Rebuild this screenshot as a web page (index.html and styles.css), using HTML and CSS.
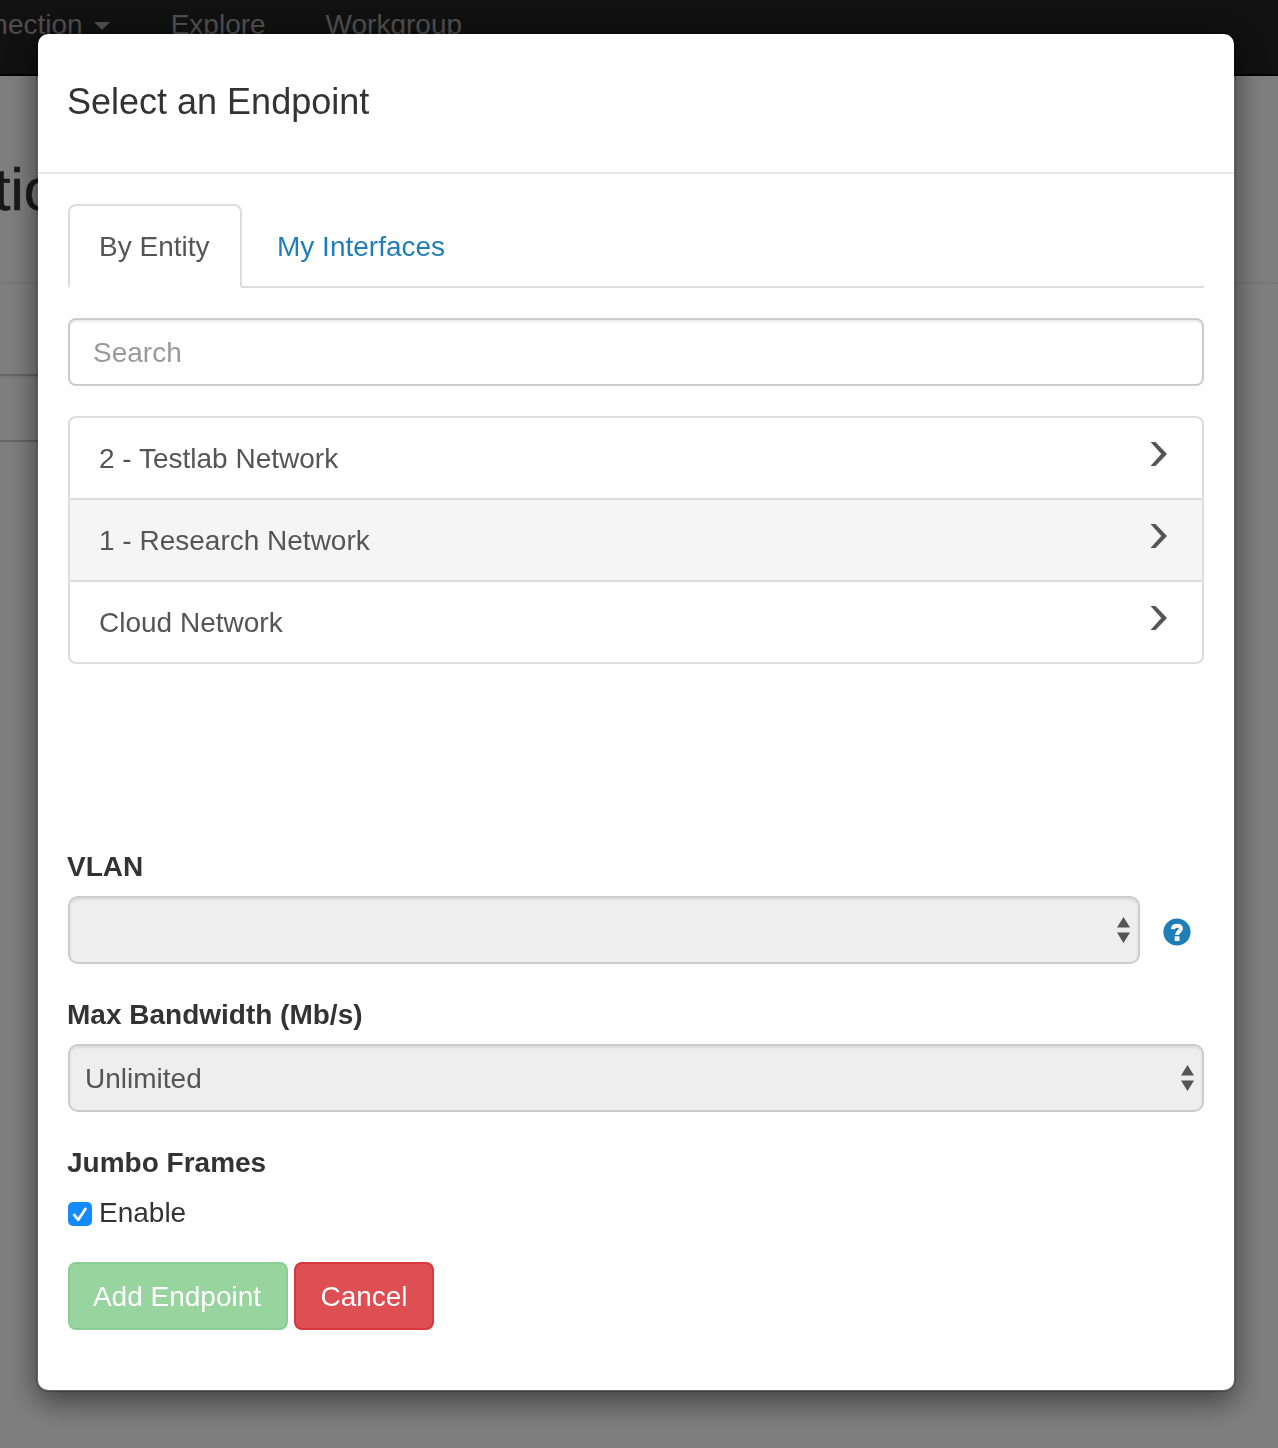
FILE: index.html
```html
<!DOCTYPE html>
<html lang="en">
<head>
<meta charset="utf-8">
<title>Select an Endpoint</title>
<link rel="stylesheet" href="styles.css">
</head>
<body>
<div class="page">
  <nav class="navbar">
    <a class="nav-link"><span class="nav-text">Connection</span><span class="caret"></span></a>
    <a class="nav-link">Explore</a>
    <a class="nav-link">Workgroup</a>
  </nav>
  <h1 class="page-title">Connection</h1>
  <div class="page-rule"></div>
  <div class="page-field"></div>
</div>

<div class="overlay">
  <div class="modal">
    <header class="modal-header"><h2 class="modal-title">Select an Endpoint</h2></header>
    <div class="modal-body">
      <div class="tabs">
        <a class="tab tab-active">By Entity</a>
        <a class="tab">My Interfaces</a>
      </div>
      <input class="search" type="text" placeholder="Search">
      <div class="list">
        <a class="item"><span>2 - Testlab Network</span><svg class="chevron" viewBox="0 0 17 24"><path d="M.5 0H5.5L17 12L5.5 24H.5L11.3 12Z"/></svg></a>
        <a class="item item-hover"><span>1 - Research Network</span><svg class="chevron" viewBox="0 0 17 24"><path d="M.5 0H5.5L17 12L5.5 24H.5L11.3 12Z"/></svg></a>
        <a class="item"><span>Cloud Network</span><svg class="chevron" viewBox="0 0 17 24"><path d="M.5 0H5.5L17 12L5.5 24H.5L11.3 12Z"/></svg></a>
      </div>

      <div class="group">
        <div class="label">VLAN</div>
        <div class="field-row">
          <div class="select"><span></span><svg class="arrows" viewBox="0 0 13 26"><path d="M6.5 0L13 10.5H0ZM0 15.5H13L6.5 26Z"/></svg></div>
          <svg class="help" viewBox="0 0 28 28"><circle cx="14" cy="14" r="13.6" fill="#1f7db7"/><path d="M9.9 11.2C10.1 8.6 11.6 7.8 14 7.8C16.5 7.8 17.9 8.9 17.9 10.7C17.9 13.6 14.1 13 14.1 17" fill="none" stroke="#fff" stroke-width="4"/><path d="M11.7 18.3H16.5V23H11.7Z" fill="#fff"/></svg>
        </div>
      </div>
      <div class="group">
        <div class="label">Max Bandwidth (Mb/s)</div>
        <div class="select"><span>Unlimited</span><svg class="arrows" viewBox="0 0 13 26"><path d="M6.5 0L13 10.5H0ZM0 15.5H13L6.5 26Z"/></svg></div>
      </div>
      <div class="group">
        <div class="label">Jumbo Frames</div>
        <div class="check-row">
          <svg class="checkbox" viewBox="0 0 24 24"><rect width="24" height="24" rx="5" fill="#148aff"/><path d="M6.2 13L10.3 17.8L17.5 6.8" fill="none" stroke="#fff" stroke-width="2.7" stroke-linecap="round" stroke-linejoin="round"/></svg>
          <span>Enable</span>
        </div>
      </div>
      <div class="buttons">
        <button class="btn btn-add">Add Endpoint</button>
        <button class="btn btn-cancel">Cancel</button>
      </div>
    </div>
  </div>
</div>
</body>
</html>
```
FILE: styles.css
```css
* { box-sizing: border-box; }
html, body { height: 100%; }
body {
  margin: 0;
  overflow: hidden;
  background: #fff;
  color: #333;
  font: 28px/40px "Liberation Sans", Arial, sans-serif;
}

/* Page behind the dialog */
.page { height: 1448px; overflow: hidden; }
.navbar {
  display: flex;
  gap: 60px;
  height: 76px;
  padding-top: 5px;
  margin-left: -59px;
  background: #222;
  border-bottom: 2px solid #080808;
  color: #9d9d9d;
}
.nav-link { display: flex; align-items: center; height: 40px; white-space: nowrap; }
.caret {
  margin: 2px 1px 0 11px;
  border: 8px solid transparent;
  border-top-color: currentColor;
  border-bottom: 0;
}
.page-title {
  margin: 81px 0 0 -213px;
  font-size: 60px;
  font-weight: 400;
  line-height: 66px;
  -webkit-text-stroke: .6px currentColor;
}
.page-rule { height: 2px; margin-top: 59px; background: #eee; }
.page-field {
  width: 1000px;
  height: 68px;
  margin: 90px 0 0 -20px;
  border: 2px solid #ccc;
  box-shadow: inset 0 2px 2px rgba(0, 0, 0, .075);
}

/* Dialog */
.overlay {
  position: fixed;
  inset: 0;
  padding: 32px 0 0 36px;
  background: rgba(0, 0, 0, .5);
}
.modal {
  width: 1200px;
  height: 1360px;
  background: #fff;
  background-clip: padding-box;
  border: 2px solid rgba(0, 0, 0, .2);
  border-radius: 12px;
  box-shadow: 0 10px 30px rgba(0, 0, 0, .5);
}
.modal-header { height: 140px; padding: 43px 29px 0; border-bottom: 2px solid #e5e5e5; }
.modal-title { margin: 0; font-size: 36px; font-weight: 400; line-height: 50px; }
.modal-body { padding: 30px; }

.tabs { display: flex; gap: 4px; height: 84px; border-bottom: 2px solid #ddd; }
.tab {
  height: 84px;
  padding: 21px 29px 19px;
  border: 2px solid transparent;
  color: #1f7db7;
}
.tab-active {
  width: 174px;
  color: #555;
  background: #fff;
  border-color: #ddd #ddd #fff;
  border-radius: 8px 8px 0 0;
}

.search {
  display: block;
  width: 100%;
  height: 68px;
  margin: 30px 0;
  padding: 14px 23px 12px;
  border: 2px solid #ccc;
  border-radius: 8px;
  box-shadow: inset 0 2px 2px rgba(0, 0, 0, .075);
  font: inherit;
}
.search::placeholder { color: #999; opacity: 1; }

.list { border: 2px solid #ddd; border-radius: 8px; overflow: hidden; margin-bottom: 183px; }
.item {
  display: flex;
  justify-content: space-between;
  height: 82px;
  padding: 21px 35px 0 29px;
  border-bottom: 2px solid #ddd;
  color: #555;
}
.item:last-child { height: 80px; border-bottom: 0; }
.item-hover { background: #f5f5f5; }
.chevron { width: 17px; height: 24px; margin-top: 3px; fill: #555; }

.group { margin-bottom: 31px; }
.label { margin: 0 0 9px -1px; font-weight: 700; }
.field-row { display: flex; align-items: center; }
.field-row .select { width: 1072px; }
.select {
  display: flex;
  align-items: center;
  justify-content: space-between;
  height: 68px;
  padding: 2px 8px 0 15px;
  background: #eee;
  border: 2px solid #ccc;
  border-radius: 10px;
  box-shadow: inset 0 2px 2px rgba(0, 0, 0, .075);
  color: #555;
}
.arrows { width: 13px; height: 26px; margin-bottom: 2px; fill: #555; }
.help { width: 28px; height: 28px; margin: 4px 0 0 23px; }
.check-row { display: flex; align-items: center; gap: 7px; height: 40px; padding-top: 2px; }
.checkbox { width: 24px; height: 24px; margin-top: 2px; }

.buttons { display: flex; gap: 6px; margin-top: -1px; }
.btn {
  height: 68px;
  padding: 2px 0 0;
  border: 2px solid;
  border-radius: 8px;
  color: #fff;
  font: inherit;
}
.btn-add { width: 220px; padding-right: 2px; background: #97d49e; border-color: #8bcd91; }
.btn-cancel { width: 140px; background: #dd4f52; border-color: #da3538; }
```
